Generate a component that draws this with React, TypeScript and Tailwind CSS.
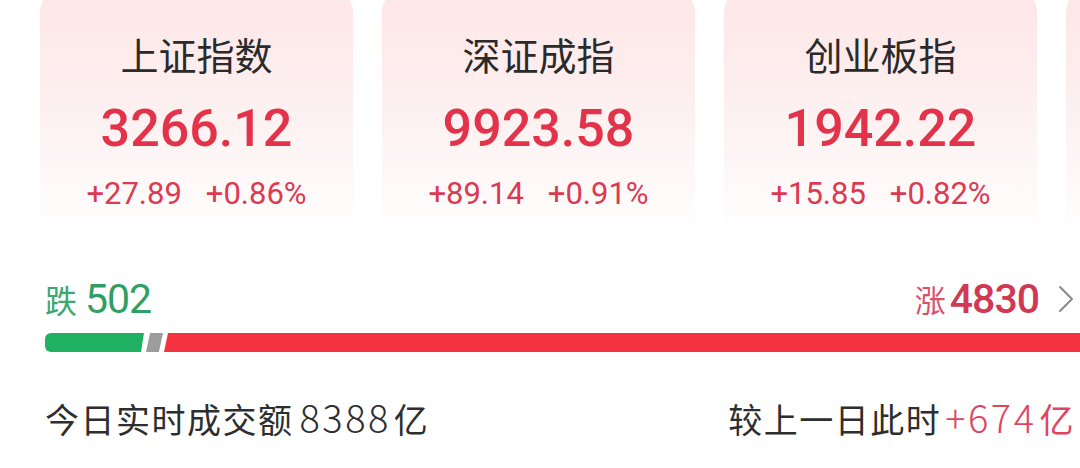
type IndexCard = {
  name: string
  value: string
  change: string
  pct: string
}

const indices: IndexCard[] = [
  { name: '上证指数', value: '3266.12', change: '+27.89', pct: '+0.86%' },
  { name: '深证成指', value: '9923.58', change: '+89.14', pct: '+0.91%' },
  { name: '创业板指', value: '1942.22', change: '+15.85', pct: '+0.82%' },
]

const cjk = { fontFamily: '"Noto Sans CJK SC", "Noto Sans", sans-serif' }
const num = { fontFamily: 'Roboto, "Noto Sans CJK SC", sans-serif' }

const cardBg = 'shrink-0 w-[313px] h-[252px] rounded-[22px] bg-gradient-to-b from-[#fde6e7] via-[#fdf1f1] to-white'

function Chevron() {
  return (
    <svg width="18" height="28" viewBox="0 0 18 28" fill="none" className="ml-[18px]">
      <path d="M3 2 L15 14 L3 26" stroke="#8a8a8a" strokeWidth="2" strokeLinecap="round" strokeLinejoin="round" />
    </svg>
  )
}

export default function App() {
  return (
    <div className="w-[1080px] h-[468px] overflow-hidden bg-white" style={cjk}>
      {/* index cards, the 4th one is cut off by the screen edge */}
      <div className="flex gap-[29px] pl-[40px] -mt-[10px]">
        {indices.map(card => (
          <div key={card.name} className={`${cardBg} flex flex-col items-center pt-[42px]`}>
            <div className="text-[38px] leading-[44px] font-normal text-[#2a2a2a]" style={cjk}>{card.name}</div>
            <div className="mt-[23px] text-[52px] leading-[60px] font-medium text-[#e2334b]" style={num}>{card.value}</div>
            <div className="mt-[18px] flex gap-[24px] text-[31px] leading-[34px] text-[#dc3a51]" style={num}>
              <span>{card.change}</span>
              <span>{card.pct}</span>
            </div>
          </div>
        ))}
        <div className={cardBg} />
      </div>

      {/* advance / decline */}
      <div className="pl-[45px] pr-[5px] mt-[37px]">
        <div className="flex items-center justify-between h-[40px]">
          <div className="flex items-center gap-[8px] text-[#2f9f66]">
            <span className="text-[32px] leading-[40px] text-[#3aa873]" style={cjk}>跌</span>
            <span className="text-[41px] leading-[40px] font-normal tracking-[-1px]" style={num}>502</span>
          </div>
          <div className="flex items-center">
            <span className="text-[31px] leading-[40px] text-[#d9526b]" style={cjk}>涨</span>
            <span className="ml-[4px] text-[41px] leading-[40px] font-medium tracking-[-1px] text-[#d03854]" style={num}>4830</span>
            <Chevron />
          </div>
        </div>

        <div className="flex h-[19px] mt-[14px] -mr-[10px]">
          <div className="w-[99px] h-full bg-[#1fb062] rounded-l-[6px] [clip-path:polygon(0_0,100%_0,97%_100%,0_100%)]" />
          <div className="ml-[2px] w-[17px] h-full bg-[#9d9d9d] [clip-path:polygon(24%_0,100%_0,76%_100%,0_100%)]" />
          <div className="ml-[1px] flex-1 h-full bg-[#f5323f] [clip-path:polygon(4px_0,100%_0,100%_100%,0_100%)]" />
        </div>

        {/* turnover */}
        <div className="flex items-center justify-between mt-[45px] text-[34px] leading-[40px] text-[#2e2e2e]">
          <div className="tracking-[1.5px]">
            今日实时成交额<span className="ml-[6px] mr-[3px] text-[38px] tracking-[2.5px] font-light">8388</span>亿
          </div>
          <div className="tracking-[1.5px]">
            较上一日此时<span className="text-[#e0455f]"><span className="ml-[4px] mr-[3px] text-[38px] tracking-[2.5px] font-light">+674</span>亿</span>
          </div>
        </div>
      </div>
    </div>
  )
}
